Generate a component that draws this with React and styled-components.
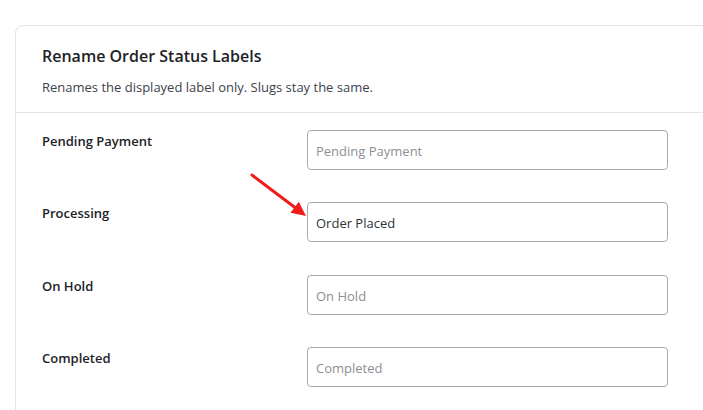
import React from 'react';
import styled, { createGlobalStyle } from 'styled-components';

const GlobalStyle = createGlobalStyle`
  html, body {
    margin: 0;
    padding: 0;
    background: #ffffff;
    overflow: hidden;
  }
  body {
    font-family: "Open Sans", "Liberation Sans", sans-serif;
    color: #1d2327;
  }
`;

const Page = styled.div`
  position: relative;
  width: 703px;
  height: 410px;
  padding: 25px 0 0 15px;
  box-sizing: border-box;
  overflow: hidden;
`;

const Card = styled.div`
  width: 760px;
  height: 500px;
  border: 1px solid #e4e5e7;
  border-radius: 8px;
  background: #fff;
  box-sizing: border-box;
`;

const CardHeader = styled.div`
  padding: 19px 26px 15px;
  border-bottom: 1px solid #e4e5e7;
`;

const Title = styled.h2`
  margin: 0;
  font-size: 16px;
  line-height: 22px;
  font-weight: 600;
  color: #1d2327;
`;

const Subtitle = styled.p`
  margin: 10px 0 0;
  font-size: 13px;
  line-height: 20px;
  color: #3c434a;
`;

const Fields = styled.div`
  display: flex;
  flex-direction: column;
  gap: 32.4px;
  padding-top: 17px;
`;

const Row = styled.div`
  display: grid;
  grid-template-columns: 291px 361px;
  align-items: start;
`;

const Label = styled.label`
  padding: 1px 0 0 26px;
  font-size: 13px;
  line-height: 20px;
  font-weight: 600;
  color: #1d2327;
`;

const Input = styled.input`
  width: 361px;
  height: 40px;
  box-sizing: border-box;
  padding: 2px 8px 0;
  border: 1px solid #a7aaad;
  border-radius: 4px;
  font-family: "Open Sans", "Liberation Sans", sans-serif;
  font-size: 13px;
  color: #2c3338;
  background: #fff;
  outline: none;

  &::placeholder {
    color: #8c8f94;
  }
`;

const Arrow = styled.svg`
  position: absolute;
  left: 240px;
  top: 165px;
  width: 75px;
  height: 60px;
  pointer-events: none;
`;

const statuses = [
  { label: 'Pending Payment', value: '' },
  { label: 'Processing', value: 'Order Placed' },
  { label: 'On Hold', value: '' },
  { label: 'Completed', value: '' },
];

export default function App() {
  return (
    <Page>
      <GlobalStyle />
      <Card>
        <CardHeader>
          <Title>Rename Order Status Labels</Title>
          <Subtitle>Renames the displayed label only. Slugs stay the same.</Subtitle>
        </CardHeader>
        <Fields>
          {statuses.map((s) => (
            <Row key={s.label}>
              <Label>{s.label}</Label>
              <Input placeholder={s.label} defaultValue={s.value} />
            </Row>
          ))}
        </Fields>
      </Card>
      <Arrow viewBox="0 0 75 60">
        <line x1="12" y1="10" x2="57" y2="44" stroke="#f01b1b" strokeWidth="3" strokeLinecap="round" />
        <polygon points="66,51 50.5,47.8 58.8,36.8" fill="#f01b1b" />
      </Arrow>
    </Page>
  );
}
